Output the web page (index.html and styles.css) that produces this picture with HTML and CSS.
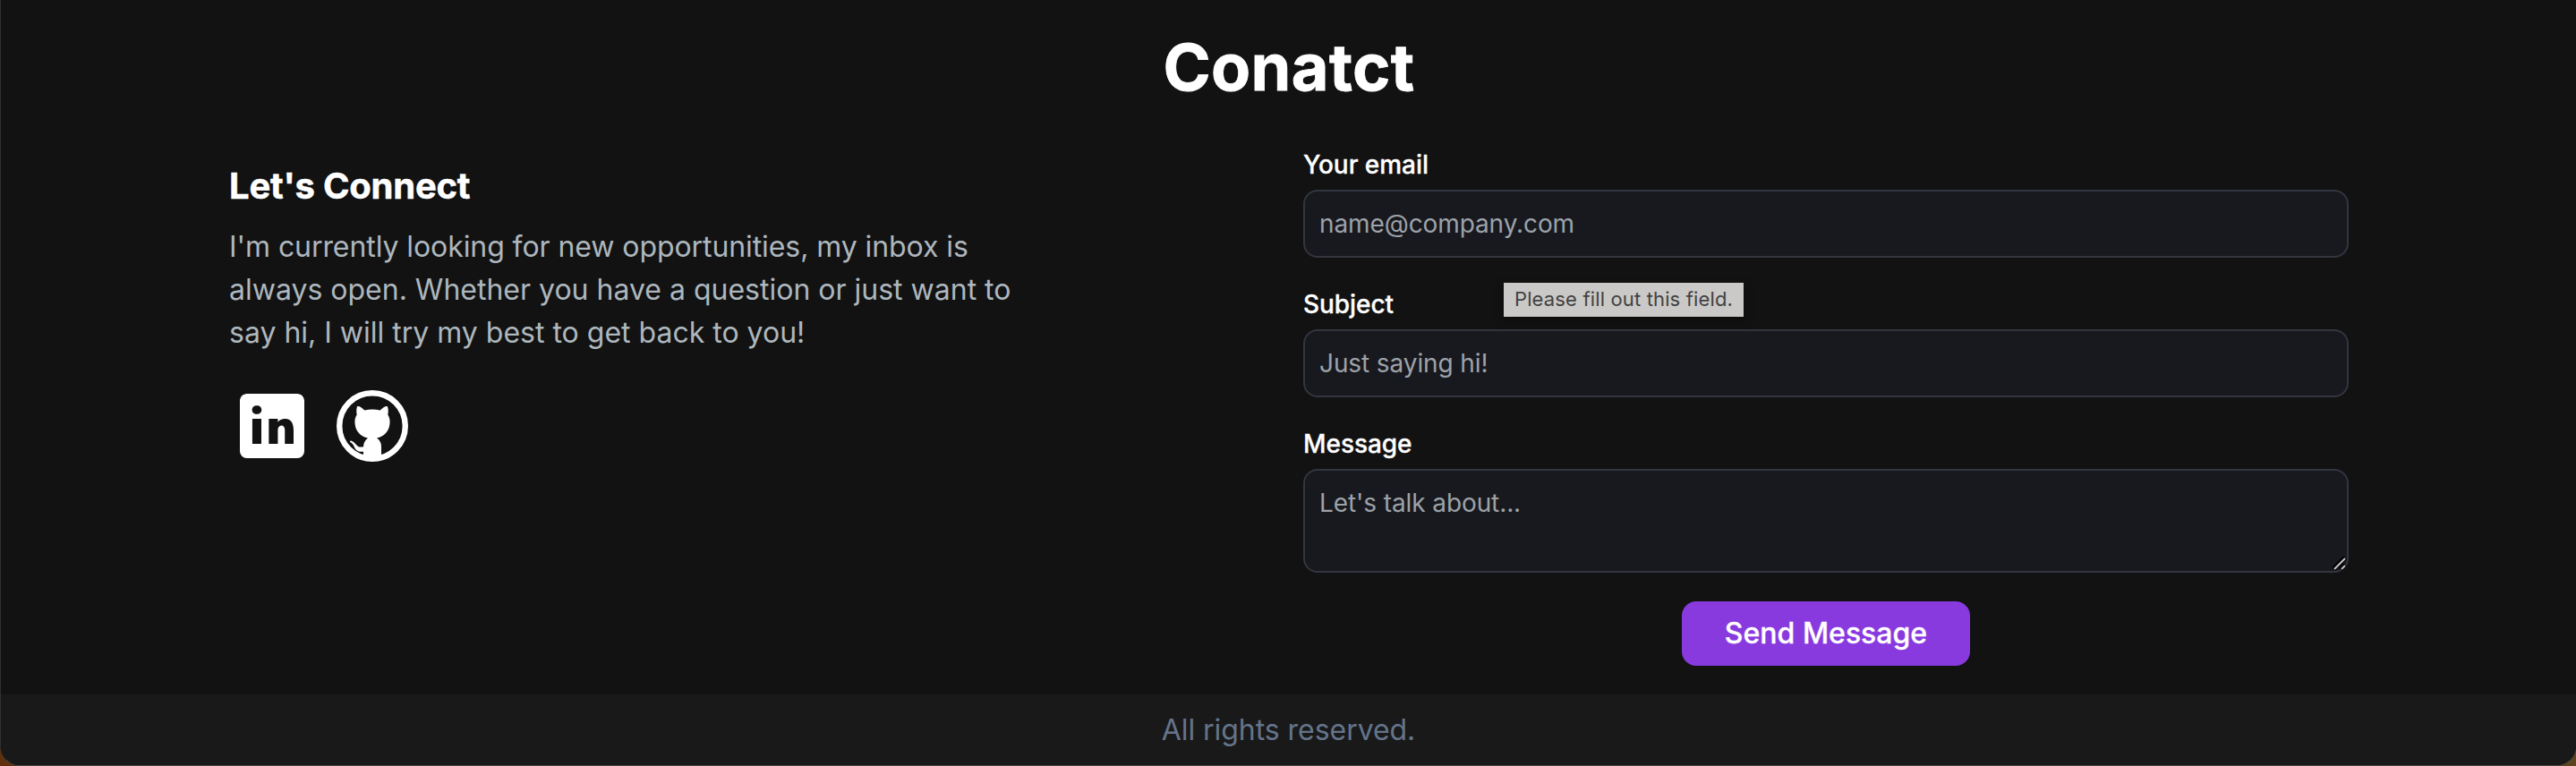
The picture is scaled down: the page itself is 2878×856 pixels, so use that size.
FILE: index.html
```
<!DOCTYPE html>
<html lang="en">
<head>
<meta charset="utf-8">
<title>Contact</title>
<link rel="stylesheet" href="styles.css">
</head>
<body>
<div class="window">
  <main class="contact">
    <h1 class="title">Conatct</h1>
    <div class="columns">
      <section class="intro">
        <h2 class="heading">Let's Connect</h2>
        <p class="text"><span class="lead">I'm currently looking for new opportunities, my inbox is</span> always open. Whether you have a question or just want to say hi, I will try my best to get back to you!</p>
        <div class="socials">
          <a class="social" aria-label="LinkedIn">
            <svg viewBox="0 0 24 24" fill="currentColor"><path d="M19,3H5C3.895,3,3,3.895,3,5v14c0,1.105,0.895,2,2,2h14c1.105,0,2-0.895,2-2V5C21,3.895,20.105,3,19,3z M9,17H6.477v-7H9V17z M7.694,8.717c-0.771,0-1.286-0.514-1.286-1.2s0.514-1.2,1.371-1.2c0.771,0,1.286,0.514,1.286,1.2S8.551,8.717,7.694,8.717z M18,17h-2.442v-3.826c0-1.058-0.651-1.302-0.895-1.302s-1.058,0.163-1.058,1.302c0,0.163,0,3.826,0,3.826h-2.523v-7h2.523v0.977C13.93,10.407,14.581,10,15.802,10C17.023,10,18,10.977,18,13.174V17z"/></svg>
          </a>
          <a class="social" aria-label="GitHub">
            <svg viewBox="0 0 96 96" fill="currentColor"><circle cx="48" cy="48" r="36.8" fill="none" stroke="currentColor" stroke-width="6.4"/><path d="M31 26.2c2.2-.7 5.4 1.4 8.2 4.2c5.700-1.300 11.900-1.300 17.600 0c2.800-2.800 6-4.900 8.200-4.200c.9 2.900 1 6.300.3 9.200c1.800 2.800 2.500 6 2.200 9.600c-.6 9.200-6.500 15-14.500 16.400c3.200 2.300 5 5.300 5 9.600V85H38v-8.300c-6.500.7-8.800-2-10.500-6c-.9-2.100-2.300-3.700-4.200-4.800c-1-1 0-1.600 1.400-1.200c2.400.6 3.800 2.400 5.300 4.300c1.700 2.200 4 3.100 8 2.300c.1-4.300 1.800-7.600 5-9.900c-8-1.400-13.900-7.200-14.500-16.400c-.3-3.600.4-6.800 2.200-9.600c-.7-2.900-.6-6.300.3-9.200z"/></svg>
          </a>
        </div>
      </section>
      <form class="form">
        <label class="label" for="email">Your email</label>
        <input class="field" id="email" type="email" placeholder="name@company.com">
        <div class="label-row">
          <label class="label" for="subject">Subject</label>
          <span class="tooltip">Please fill out this field.</span>
        </div>
        <input class="field" id="subject" type="text" placeholder="Just saying hi!">
        <label class="label" for="message">Message</label>
        <div class="message-box">
          <textarea class="field message" id="message" placeholder="Let's talk about..."></textarea>
          <svg class="grip" viewBox="0 0 16 16" fill="none"><path d="M1 14L14 1M9 14l5-5" stroke="#000" stroke-width="5"/><path d="M2 14L14 2M10 14l4-4" stroke="#c4c4c4" stroke-width="2"/></svg>
        </div>
        <button class="send" type="button">Send Message</button>
      </form>
    </div>
  </main>
  <footer class="footer">All rights reserved.</footer>
</div>
</body>
</html>
```
FILE: styles.css
```
* { box-sizing: border-box; }

body {
  margin: 0;
  height: 856px;
  overflow: hidden;
  background: linear-gradient(90deg, #60300e, #2a1a10 50%, #5c4420);
  font-family: Inter, "Liberation Sans", sans-serif;
}

.window {
  display: flex;
  flex-direction: column;
  height: 856px;
  overflow: hidden;
  background: #121212;
  border-left: 1px solid #303030;
  border-bottom: 1px solid #484848;
  border-radius: 0 0 22px 22px;
}

.contact {
  height: 776px;
  padding: 35px 254px 0 255px;
}

.title {
  margin: 0 0 49px;
  color: #fff;
  font-size: 72px;
  font-weight: 700;
  line-height: 80px;
  text-align: center;
  letter-spacing: .4px;
  -webkit-text-stroke: .8px #fff;
}

.columns {
  display: grid;
  grid-template-columns: 1fr 1fr;
  gap: 32px;
}

.intro { padding-top: 16px; }

.heading {
  margin: 0 0 16px;
  color: #fff;
  font-size: 40px;
  font-weight: 700;
  line-height: 56px;
  letter-spacing: -.22px;
  -webkit-text-stroke: .5px #fff;
}

.text {
  width: 896px;
  margin: 0 0 32px;
  color: #adb7be;
  font-size: 32px;
  line-height: 48px;
}

.lead { letter-spacing: -.08px; }

.socials {
  display: flex;
  gap: 16px;
}

.social {
  width: 96px;
  height: 96px;
  color: #fff;
}

.social svg { display: block; }

.form {
  display: flex;
  flex-direction: column;
}

.label {
  display: block;
  margin-bottom: 8px;
  color: #fff;
  font-size: 28px;
  font-weight: 500;
  line-height: 40px;
  letter-spacing: -.05px;
  -webkit-text-stroke: .3px #fff;
}

.label-row { position: relative; }

.tooltip {
  position: absolute;
  left: 224px;
  top: -4px;
  width: 268px;
  height: 38px;
  background: #cac9c7;
  box-shadow: 0 4px 12px rgba(0, 0, 0, .4);
  color: #424242;
  font-size: 22px;
  line-height: 37px;
  text-align: center;
  letter-spacing: .15px;
}

.field {
  width: 100%;
  height: 76px;
  margin: 0 0 32px;
  padding: 16px;
  border: 2px solid #33353f;
  border-radius: 16px;
  outline: 0;
  background: #18191e;
  font: 400 28px/40px Inter, "Liberation Sans", sans-serif;
  letter-spacing: -.1px;
}

.field::placeholder {
  color: #9ca2a9;
  opacity: 1;
}

.message-box { position: relative; }

.message {
  display: block;
  height: 116px;
  resize: none;
}

.grip {
  position: absolute;
  right: 2px;
  top: 98px;
  width: 16px;
  height: 16px;
}

.send {
  align-self: center;
  width: 322px;
  height: 72px;
  padding: 0;
  border: 0;
  border-radius: 16px;
  background: #893adf;
  color: #fff;
  font: 500 32px/48px Inter, "Liberation Sans", sans-serif;
  -webkit-text-stroke: .3px #fff;
}

.footer {
  flex: 1;
  padding-top: 16px;
  background: #191919;
  color: #64748b;
  font-size: 32px;
  line-height: 48px;
  text-align: center;
  letter-spacing: -.05px;
}
```
